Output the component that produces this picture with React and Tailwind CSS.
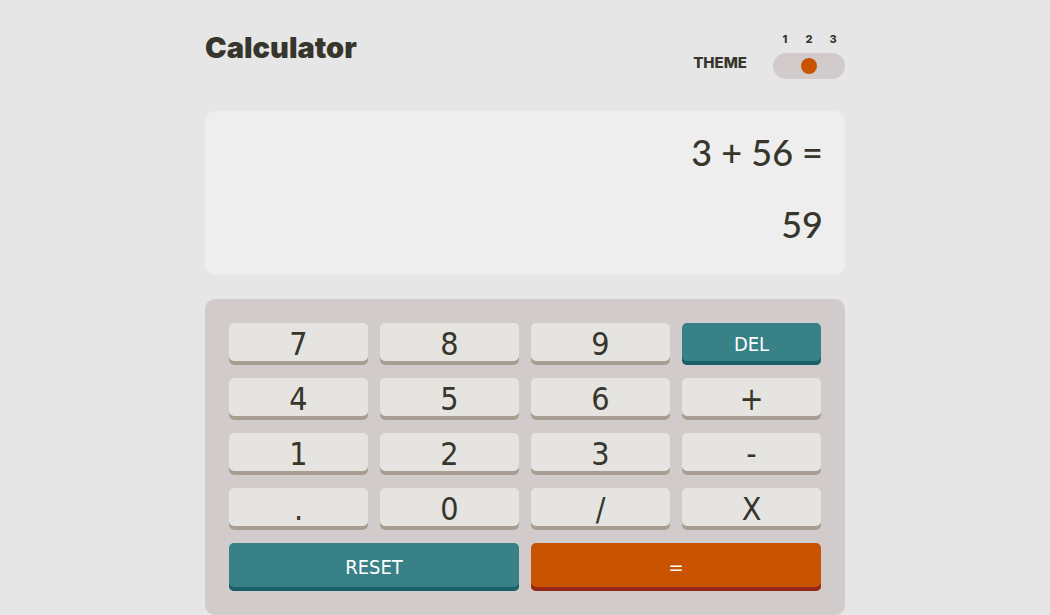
import { useState } from "react";

const keys = ["7", "8", "9", "DEL", "4", "5", "6", "+", "1", "2", "3", "-", ".", "0", "/", "X", "RESET", "="];

const base = "flex items-center justify-center rounded-[5px] cursor-pointer";
const styles = {
  plain: "h-[42px] text-[32px] leading-10 bg-[#e5e4e0] text-[#36362c] shadow-[inset_0_-4px_0_#a79e91]",
  DEL: "h-[42px] text-xl leading-10 bg-[#388187] text-white shadow-[inset_0_-4px_0_#1b6066]",
  RESET: "col-span-2 h-12 text-xl leading-10 bg-[#388187] text-white shadow-[inset_0_-4px_0_#1b6066]",
  "=": "col-span-2 h-12 text-xl leading-10 bg-[#c85402] text-white shadow-[inset_0_-4px_0_#942718]",
};

const symbols = { X: "*", "+": "+", "-": "-", "/": "/" };

function compute(a, op, b) {
  const x = Number(a);
  const y = Number(b);
  if (op === "+") return x + y;
  if (op === "-") return x - y;
  if (op === "*") return x * y;
  return x / y;
}

function ThemeSwitch() {
  const [theme, setTheme] = useState("2");
  return (
    <div role="radiogroup" aria-labelledby="theme-title" className="flex items-end font-['Inter',sans-serif]">
      <span id="theme-title" className="mr-[26px] pb-1 text-[15px] leading-6 font-extrabold">THEME</span>
      <div>
        <div className="grid grid-cols-3 text-center text-[11px] leading-4 font-extrabold">
          {["1", "2", "3"].map((n) => (
            <label key={n} htmlFor={`theme-${n}`}>{n}</label>
          ))}
        </div>
        <div className="mt-1.5 grid h-[26px] w-[72px] grid-cols-3 place-items-center rounded-full bg-[#d1cccb]">
          {["1", "2", "3"].map((n) => (
            <input
              key={n}
              id={`theme-${n}`}
              type="radio"
              name="theme"
              checked={theme === n}
              onChange={() => setTheme(n)}
              className="size-4 cursor-pointer appearance-none rounded-full checked:bg-[#c85402]"
            />
          ))}
        </div>
      </div>
    </div>
  );
}

export default function App() {
  const [state, setState] = useState({ left: "3", op: "+", right: "56", value: "59", done: true });

  const press = (key) => {
    setState((s) => {
      if (key === "RESET") return { left: "", op: "", right: "", value: "0", done: false };
      if (key === "DEL") return s.done ? s : { ...s, value: s.value.slice(0, -1) || "0" };
      if (key === "=") {
        if (!s.op || s.done) return s;
        return { ...s, right: s.value, value: String(compute(s.left, s.op, s.value)), done: true };
      }
      if (symbols[key]) return { left: s.value, op: symbols[key], right: "", value: "0", done: false };
      if (s.done) return { left: "", op: "", right: "", value: key, done: false };
      if (key === "." && s.value.includes(".")) return s;
      return { ...s, value: s.value === "0" && key !== "." ? key : s.value + key };
    });
  };

  const expression = state.done ? `${state.left} ${state.op} ${state.right} =` : `${state.left} ${state.op}`;

  return (
    <div className="min-h-screen bg-[#e6e6e6] font-['Lato',sans-serif] text-[#36362c]">
      <main className="mx-auto max-w-[640px] pt-[31px]">
        <header className="flex items-start justify-between">
          <h1 className="font-['Inter',sans-serif] text-[29px] leading-[34px] font-black">Calculator</h1>
          <ThemeSwitch />
        </header>
        <output className="mt-8 flex flex-col rounded-[10px] bg-[#eeeeee] px-[22px] pt-[5px] pb-[15px] text-right text-[36px] leading-[72px] font-medium">
          <span className="min-h-[72px]">{expression}</span>
          <span className="min-h-[72px]">{state.value}</span>
        </output>
        <section
          aria-label="Keypad"
          className="mt-6 grid grid-cols-4 gap-x-3 gap-y-[13px] rounded-[10px] bg-[#d1cccb] p-6 font-['DejaVu_Sans_Condensed','DejaVu_Sans',sans-serif]"
        >
          {keys.map((key) => (
            <button key={key} type="button" onClick={() => press(key)} className={`${base} ${styles[key] || styles.plain}`}>
              {key}
            </button>
          ))}
        </section>
      </main>
    </div>
  );
}
